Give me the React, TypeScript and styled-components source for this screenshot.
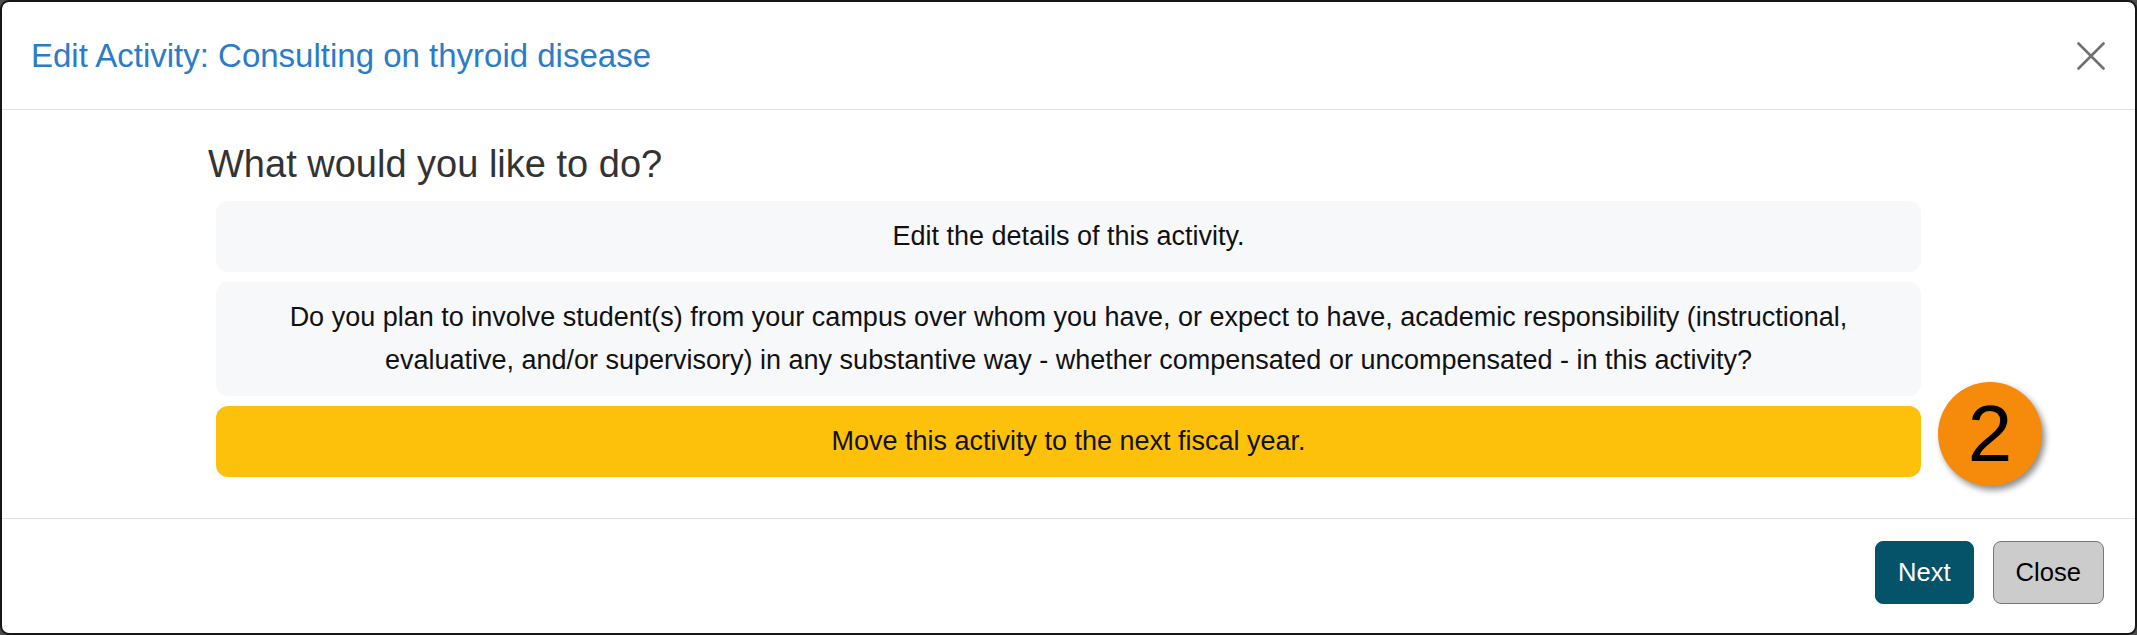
import React from 'react';
import styled, { createGlobalStyle } from 'styled-components';

const GlobalStyle = createGlobalStyle`
  * {
    box-sizing: border-box;
  }
  html,
  body {
    margin: 0;
    padding: 0;
    background-color: #4d4d4d;
    font-family: 'Liberation Sans', Arial, sans-serif;
  }
`;

const options = [
  { id: 1, text: 'Edit the details of this activity.' },
  {
    id: 2,
    text: 'Do you plan to involve student(s) from your campus over whom you have, or expect to have, academic responsibility (instructional, evaluative, and/or supervisory) in any substantive way - whether compensated or uncompensated - in this activity?',
  },
  { id: 3, text: 'Move this activity to the next fiscal year.', selected: true, step: 2 },
];

export default function App() {
  return (
    <>
      <GlobalStyle />
      <Modal>
        <Header>
          <Title>Edit Activity: Consulting on thyroid disease</Title>
          <CloseIcon aria-label="Close">
            <svg width="28" height="28" viewBox="0 0 28 28">
              <path d="M1.5 1.5 L26.5 26.5 M26.5 1.5 L1.5 26.5" stroke="#707070" strokeWidth="2.6" strokeLinecap="round" />
            </svg>
          </CloseIcon>
        </Header>

        <Body>
          <Column>
            <Question>What would you like to do?</Question>
            <OptionList>
              {options.map(({ id, text, selected, step }) => (
                <Option key={id} $selected={selected}>
                  {text}
                  {step && <StepBadge>{step}</StepBadge>}
                </Option>
              ))}
            </OptionList>
          </Column>
        </Body>

        <Footer>
          <Button $variant="primary">Next</Button>
          <Button>Close</Button>
        </Footer>
      </Modal>
    </>
  );
}

const Modal = styled.div`
  width: 2137px;
  height: 635px;
  background-color: #fff;
  border: 2px solid #161616;
  border-radius: 9px;
  display: flex;
  flex-direction: column;
  overflow: hidden;
`;

const Header = styled.div`
  height: 108px;
  flex-shrink: 0;
  display: flex;
  align-items: center;
  justify-content: space-between;
  padding: 0 30px 0 29px;
  border-bottom: 1px solid #e0dfe6;
`;

const Title = styled.h5`
  margin: 0;
  font-size: 33px;
  font-weight: 400;
  line-height: 48px;
  color: #2b7cc8;
`;

const CloseIcon = styled.div`
  width: 28px;
  height: 28px;
  display: flex;
  cursor: pointer;
`;

const Body = styled.div`
  flex: 1;
  padding-top: 31px;
`;

const Column = styled.div`
  width: 1721px;
  margin: 0 auto;
`;

const Question = styled.h4`
  margin: 0 0 14px;
  font-size: 38px;
  font-weight: 400;
  line-height: 46px;
  color: #333;
`;

const OptionList = styled.div`
  display: flex;
  flex-direction: column;
  gap: 10px;
  padding: 0 8px;
`;

const Option = styled.div<{ $selected?: boolean }>`
  position: relative;
  padding: 14px 24px;
  border-radius: 12px;
  background-color: ${({ $selected }) => ($selected ? '#fec10b' : '#f7f8fa')};
  color: #111;
  font-size: 27px;
  line-height: 43px;
  text-align: center;
  cursor: pointer;
`;

const StepBadge = styled.div`
  position: absolute;
  top: -24px;
  left: calc(100% + 17px);
  width: 104px;
  height: 104px;
  border-radius: 50%;
  background-color: #f58a0b;
  box-shadow: 3px 4px 6px rgba(0, 0, 0, 0.45);
  display: flex;
  align-items: center;
  justify-content: center;
  color: #000;
  font-size: 80px;
  line-height: 1;
`;

const Footer = styled.div`
  height: 115px;
  flex-shrink: 0;
  display: flex;
  justify-content: flex-end;
  align-items: flex-start;
  gap: 19px;
  padding: 22px 31px 0;
  border-top: 1px solid #e0dfe6;
`;

const Button = styled.button<{ $variant?: 'primary' }>`
  height: 63px;
  padding: 0 22px;
  border-radius: 8px;
  border: 1px solid ${({ $variant }) => ($variant ? '#045369' : '#777')};
  background-color: ${({ $variant }) => ($variant ? '#045369' : '#cccccc')};
  color: ${({ $variant }) => ($variant ? '#fff' : '#000')};
  font-family: 'Liberation Sans', Arial, sans-serif;
  font-size: 25.6px;
  cursor: pointer;
`;
